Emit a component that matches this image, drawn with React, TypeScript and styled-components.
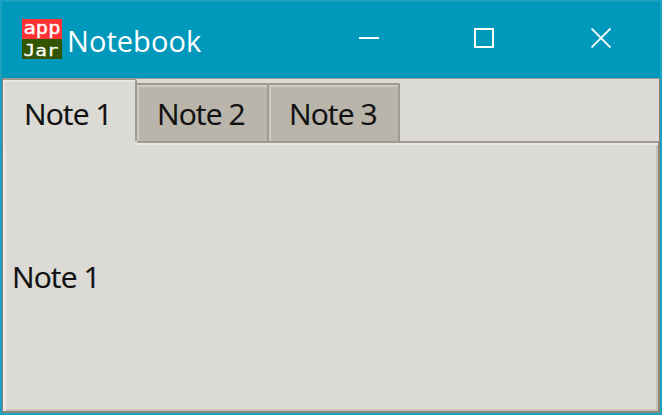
import React, { useState } from 'react';
import styled, { createGlobalStyle } from 'styled-components';

const GlobalStyle = createGlobalStyle`
  * { box-sizing: border-box; }
  body { margin: 0; overflow: hidden; }
`;

const Window = styled.div`
  display: flex;
  flex-direction: column;
  width: 662px;
  height: 415px;
  border: 2px solid #1aa2c1;
  background: #dcdad5;
  font-family: 'Open Sans', sans-serif;
`;

const TitleBar = styled.header`
  display: flex;
  flex: none;
  height: 76px;
  padding-left: 20px;
  background: #0099bc;
  color: #fff;
`;

const AppIcon = styled.svg`
  flex: none;
  width: 40px;
  height: 40px;
  margin-top: 17px;
  overflow: visible;
`;

const Title = styled.h1`
  flex: 1;
  margin: 0 0 0 5px;
  padding-top: 19px;
  font-size: 29px;
  font-weight: 400;
  line-height: 40px;
  letter-spacing: 0.05px;
  white-space: nowrap;
`;

const Controls = styled.div`
  display: flex;
  height: 72px;
  margin-right: 1px;
`;

const ControlButton = styled.button`
  display: flex;
  align-items: center;
  justify-content: center;
  width: 116px;
  height: 72px;
  padding: 0;
  border: 0;
  background: transparent;
  color: #fff;
`;

const MaximizeButton = styled(ControlButton)`
  padding-right: 2px;
`;

const TabStrip = styled.div`
  display: flex;
  flex: none;
  align-items: flex-end;
  height: 63px;
  border-top: 1px solid #9e9a91;
  border-left: 1px solid #857f73;
  border-right: 1px solid #857f73;
`;

const Tab = styled.button<{ $active: boolean; $width: number }>`
  flex: none;
  width: ${(p) => p.$width}px;
  height: ${(p) => (p.$active ? 62 : 58)}px;
  padding: 0 0 0 ${(p) => (p.$active ? 21 : 20)}px;
  border: 0 solid #9e9a91;
  border-width: ${(p) => (p.$active ? '1px 2px 0 0' : '2px 2px 0 0')};
  border-radius: 0 2px 0 0;
  background: ${(p) => (p.$active ? '#dcdad5' : '#bab5ab')};
  box-shadow: inset 2px 2px 0 ${(p) => (p.$active ? '#eae8e3' : '#cfcbc4')};
  color: #111;
  font: 400 30px/32px 'Open Sans', sans-serif;
  text-align: left;
`;

const TabLabel = styled.span<{ $active: boolean }>`
  display: block;
  padding-top: ${(p) => (p.$active ? 6 : 2)}px;
  letter-spacing: -0.9px;
  white-space: nowrap;
  -webkit-text-stroke: 0.2px #111;
`;

const Pane = styled.main<{ $gapWidth: number }>`
  position: relative;
  display: flex;
  flex: 1;
  align-items: center;
  padding: 0 0 0 6px;
  border: 2px solid #9e9a91;
  border-left: 1px solid #857f73;
  border-right-color: #8b857a;
  border-bottom-color: #8b857a;
  box-shadow: inset 3px 2px 0 #eae8e3, inset -2px -2px 0 #c7c3bb;

  &::before {
    position: absolute;
    top: -2px;
    left: 0;
    width: ${(p) => p.$gapWidth}px;
    height: 4px;
    border-left: 2px solid #eae8e3;
    background: #dcdad5;
    content: '';
  }
`;

const Note = styled.p`
  margin: 0 0 0 3px;
  color: #111;
  font-size: 30px;
  line-height: 36px;
  letter-spacing: -0.9px;
  -webkit-text-stroke: 0.2px #111;
`;

const IconText = styled.text<{ $size: number }>`
  fill: #fff;
  stroke: #fff;
  stroke-width: 0.3px;
  font: 400 ${(p) => p.$size}px 'DejaVu Sans Mono', monospace;
`;

const tabs = [
  { label: 'Note 1', width: 134 },
  { label: 'Note 2', width: 132 },
  { label: 'Note 3', width: 131 },
];

export default function App() {
  const [active, setActive] = useState(0);

  return (
    <>
      <GlobalStyle />
      <Window>
        <TitleBar>
          <AppIcon viewBox="0 0 40 40">
            <rect width="40" height="20" fill="#ff3333" />
            <rect y="20" width="40" height="20" fill="#335500" />
            <IconText x="1.5" y="14.5" $size={17} textLength="37" lengthAdjust="spacingAndGlyphs">app</IconText>
            <IconText x="1.5" y="36.5" $size={15.5} textLength="35" lengthAdjust="spacingAndGlyphs">Jar</IconText>
          </AppIcon>
          <Title>Notebook</Title>
          <Controls>
            <ControlButton aria-label="Minimize">
              <svg width="20" height="20"><path d="M0 10H20" stroke="currentColor" strokeWidth="2" /></svg>
            </ControlButton>
            <MaximizeButton aria-label="Maximize">
              <svg width="20" height="20"><rect x="1" y="1" width="18" height="18" fill="none" stroke="currentColor" strokeWidth="2" /></svg>
            </MaximizeButton>
            <ControlButton aria-label="Close">
              <svg width="20" height="20"><path d="M.5.5 19.5 19.5M19.5.5.5 19.5" stroke="currentColor" strokeWidth="1.8" /></svg>
            </ControlButton>
          </Controls>
        </TitleBar>
        <TabStrip role="tablist">
          {tabs.map((tab, index) => (
            <Tab
              key={tab.label}
              role="tab"
              aria-selected={index === active}
              $active={index === active}
              $width={tab.width}
              onClick={() => setActive(index)}
            >
              <TabLabel $active={index === active}>{tab.label}</TabLabel>
            </Tab>
          ))}
        </TabStrip>
        <Pane $gapWidth={132}>
          <Note>{tabs[active].label}</Note>
        </Pane>
      </Window>
    </>
  );
}
